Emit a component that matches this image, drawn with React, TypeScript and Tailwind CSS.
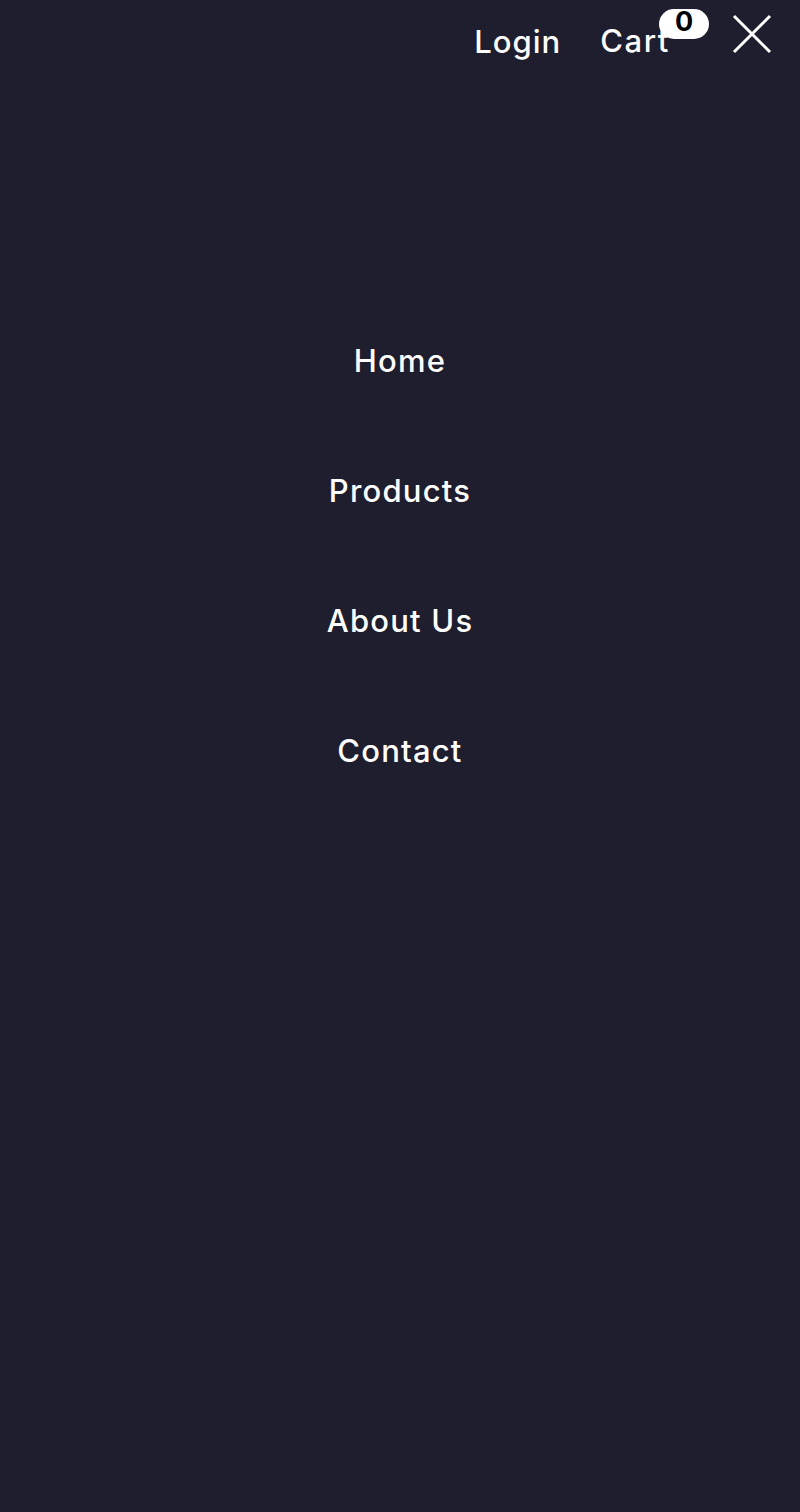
import { useState } from "react"

const links = ["Home", "Products", "About Us", "Contact"]

const App = () => {
  const [cartCount] = useState(0)

  return (
    <main
      className="min-h-[1512px] w-full bg-[#1e1e2f] text-white"
      style={{ fontFamily: "Inter, 'Noto Sans', sans-serif" }}
    >
      <header className="flex items-center justify-end h-[82px] pr-[28px]">
        <a className="text-[31px] font-medium leading-none tracking-[1px] mr-[39px]">Login</a>
        <div className="relative mr-[62px]">
          <a className="text-[31px] font-medium leading-none tracking-[1.6px]">Cart</a>
          <span className="absolute left-[59px] top-[-16px] w-[50px] h-[30px] rounded-full bg-white text-black text-[27px] font-bold leading-[26px] text-center">
            {cartCount}
          </span>
        </div>
        <button className="w-[40px] h-[40px] -mt-[15px]">
          <svg viewBox="0 0 40 40" className="w-[40px] h-[40px]" stroke="white" strokeWidth="3" fill="none">
            <path d="M2 2 L38 38 M38 2 L2 38" />
          </svg>
        </button>
      </header>
      <nav className="flex flex-col items-center pt-[254px]">
        {links.map((l) => (
          <a key={l} className="text-[31px] font-medium h-[130px] leading-[50px] tracking-[1.2px]">
            {l}
          </a>
        ))}
      </nav>
    </main>
  )
}

export default App
